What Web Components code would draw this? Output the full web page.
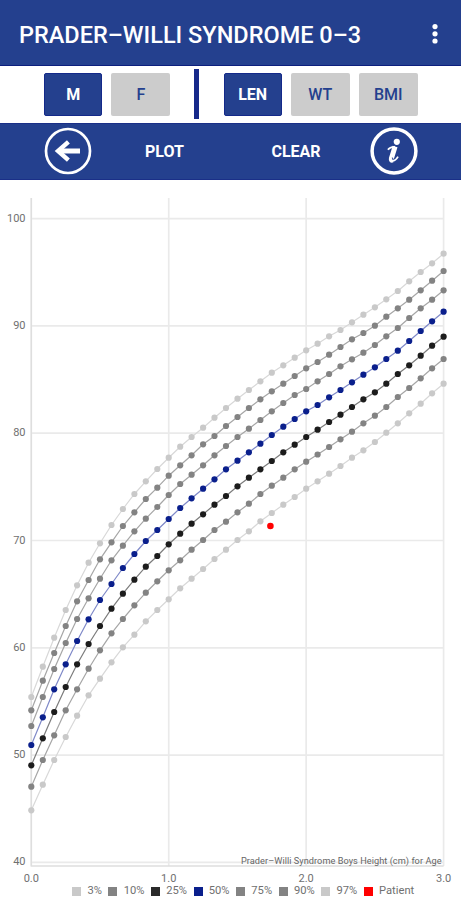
<!DOCTYPE html>
<html lang="en">
<head>
<meta charset="utf-8">
<title>Prader-Willi Syndrome 0-3</title>
<style>
  body {
    margin: 0;
    background: #fff;
    font-family: Roboto, "Liberation Sans", sans-serif;
  }
</style>
</head>
<body>
<growth-app></growth-app>

<script>
class AppHeader extends HTMLElement {
  constructor() {
    super();
    this.attachShadow({ mode: 'open' });
  }

  connectedCallback() {
    this.shadowRoot.innerHTML = `
      <style>
        :host {
          display: flex;
          align-items: center;
          justify-content: space-between;
          box-sizing: border-box;
          height: 65.5px;
          padding: 5px 22px 0 19px;
          background: #24408e;
          border-bottom: 1.5px solid #0c1f7e;
          color: #fff;
        }

        h1 {
          margin: 0;
          font-size: 23.5px;
          font-weight: 500;
          line-height: 28px;
          white-space: nowrap;
        }

        svg {
          display: block;
          margin-top: -2px;
        }
      </style>

      <h1><slot></slot></h1>
      <svg width="8" height="22" fill="#fff">
        <circle cx="4" cy="3.6" r="2.6"/>
        <circle cx="4" cy="10.8" r="2.6"/>
        <circle cx="4" cy="18" r="2.6"/>
      </svg>
    `;
  }
}

class ToggleButton extends HTMLElement {
  constructor() {
    super();
    this.attachShadow({ mode: 'open' });
  }

  connectedCallback() {
    this.shadowRoot.innerHTML = `
      <style>
        :host {
          display: flex;
          align-items: center;
          justify-content: center;
          box-sizing: border-box;
          width: 59px;
          height: 43px;
          border-radius: 2px;
          background: #ccc;
          color: #24408e;
          font-size: 16px;
          font-weight: 500;
          padding-top: 1px;
        }

        :host([selected]) {
          width: 58px;
          background: #24408e;
          border: 1px solid #14298a;
          color: #fff;
          font-weight: 700;
        }
      </style>

      <slot></slot>
    `;
  }
}

class ToggleRow extends HTMLElement {
  constructor() {
    super();
    this.attachShadow({ mode: 'open' });
  }

  connectedCallback() {
    this.shadowRoot.innerHTML = `
      <style>
        :host {
          display: flex;
          align-items: center;
          box-sizing: border-box;
          height: 57px;
          padding-left: 44.3px;
          background: #fff;
        }

        .group {
          display: flex;
          gap: 9px;
        }

        .divider {
          width: 5px;
          height: 50px;
          margin: 0 24.4px 0 24px;
          background: #16298a;
        }
      </style>

      <div class="group"><slot name="sex"></slot></div>
      <div class="divider"></div>
      <div class="group"><slot name="measure"></slot></div>
    `;
  }
}

class ActionBar extends HTMLElement {
  constructor() {
    super();
    this.attachShadow({ mode: 'open' });
  }

  connectedCallback() {
    this.shadowRoot.innerHTML = `
      <style>
        :host {
          display: grid;
          grid-template-columns: 48px 146px 117px 48px;
          align-items: center;
          box-sizing: border-box;
          height: 57.5px;
          padding-left: 43.5px;
          background: #24408e;
          border-top: 1px solid #1a2f88;
          border-bottom: 1px solid #1a2f88;
          color: #fff;
          font-size: 16px;
          font-weight: 700;
          text-align: center;
        }

        svg {
          display: block;
        }

        .info {
          margin-left: 15px;
        }
      </style>

      <svg width="48" height="48" fill="none" stroke="#fff">
        <circle cx="24" cy="24" r="22" stroke-width="2.7"/>
        <path d="M36 24H15" stroke-width="5"/>
        <path d="M24.4 14.8L14 24L24.4 33.2" stroke-width="4.4"/>
      </svg>
      <span>PLOT</span>
      <span>CLEAR</span>
      <svg class="info" width="48" height="48" fill="none" stroke="#fff">
        <circle cx="24" cy="24" r="21.9" stroke-width="3.5"/>
        <circle cx="26.8" cy="14.8" r="3.1" fill="#fff" stroke="none"/>
        <path d="M18 22.8C19.8 20 22.6 20 25 19.8" stroke-width="1.9"/>
        <path d="M25.1 19.6L21.4 31.4Q21 33.6 22.6 33" stroke-width="5"/>
        <path d="M21.4 33.8C24.4 34.4 26.6 32 28 29.6" stroke-width="1.8"/>
      </svg>
    `;
  }
}

// vertical position of each monthly point, 0 to 36 months
const CURVES = [
  { color: '#c9c9c9', line: '#d8d8d8', points: [697, 666.7, 637.7, 610, 585.3, 562.7, 543.3, 525, 509, 494, 481.3, 469, 457.7, 446.7, 437, 427.7, 417.7, 408, 398.7, 390, 381.3, 372.7, 365.3, 357.7, 350.3, 343.7, 336.3, 330, 322.3, 314.7, 307.3, 299.3, 291, 281.3, 272, 263.3, 253.7] },
  { color: '#838383', line: '#a6a6a6', points: [710.3, 680.7, 653, 626, 601.3, 580, 559.3, 542.3, 526, 512.3, 499, 487.7, 475.7, 465.3, 455.3, 444.3, 436, 426, 417, 408, 399.3, 391.3, 383.7, 376, 368.3, 362, 354.7, 347, 339.3, 333, 325.7, 316.7, 308.3, 299.7, 290.3, 280.7, 271] },
  { color: '#838383', line: '#a6a6a6', points: [726, 697, 669, 643, 619, 598.3, 578.7, 560.3, 545.7, 531.3, 518.7, 507, 495, 484, 474.7, 465.3, 455.3, 446, 437, 428.7, 420, 411.3, 403, 395, 389, 381.3, 374, 366.3, 359.3, 352.7, 345, 336.3, 328, 318, 308.3, 299.7, 290.3] },
  { color: '#0a1f8c', line: '#7f89c8', points: [745, 717.3, 689.3, 664.3, 641, 619.3, 600, 584, 568, 554, 541, 530, 519, 508, 498.3, 488.7, 479.3, 469.3, 460.7, 452.3, 443.7, 435, 426.7, 419, 411.3, 405, 397.3, 390, 382.3, 374.7, 367.3, 359, 350.7, 341, 331, 321.3, 311.7] },
  { color: '#1c1c1c', line: '#7c7c7c', points: [765.3, 738.3, 712, 687, 664.3, 644, 626, 608.7, 593.7, 579.7, 566.7, 556, 544.3, 533.7, 523.7, 514.3, 504.7, 496, 486.3, 477.7, 469.3, 461, 452.3, 444.7, 437, 429.7, 422, 414.7, 407, 399.3, 392.3, 383.7, 374, 365.3, 355.7, 345.7, 336.7] },
  { color: '#838383', line: '#a6a6a6', points: [786.7, 760, 735.3, 710.3, 689.3, 668.7, 650.3, 633.3, 619, 605.3, 592.7, 581.3, 570.3, 560.3, 549.7, 540, 530, 521.7, 512.3, 503.7, 494, 485.7, 477.7, 469.3, 461.7, 454.5, 447, 439.3, 431.7, 423.3, 415.7, 407, 397, 388, 378.3, 368.3, 359] },
  { color: '#c9c9c9', line: '#d8d8d8', points: [810.3, 784.7, 760, 737, 715.7, 695.3, 678.7, 662.3, 647.3, 634.7, 621.3, 610, 599.3, 588.3, 578.7, 569, 559, 549.7, 540, 531.3, 521.3, 513, 504.7, 497, 488.7, 481.3, 473.7, 466, 457.7, 450.3, 442, 432.7, 423.3, 413.3, 403.7, 393.3, 383.7] }
];

const LEFT = 31.3;
const RIGHT = 443.6;
const TOP = 198;
const BOTTOM = 866;

class GrowthChart extends HTMLElement {
  constructor() {
    super();
    this.attachShadow({ mode: 'open' });
  }

  grid() {
    let out = '';
    for (let year = 0; year <= 3; year++) {
      const x = LEFT + year * (RIGHT - LEFT) / 3;
      out += `<path class="grid" d="M${x} ${TOP}V${BOTTOM}"/>`;
      out += `<text x="${x}" y="881.6" text-anchor="middle">${year}.0</text>`;
    }
    for (let cm = 40; cm <= 100; cm += 10) {
      const y = 218.6 + (100 - cm) * 10.73;
      out += `<path class="grid" d="M${LEFT} ${y}H${RIGHT}"/>`;
      out += `<text x="25.5" y="${y + 3}" text-anchor="end">${cm}</text>`;
    }
    out += `<path class="axis" d="M${LEFT} ${TOP}V${BOTTOM}H${RIGHT}"/>`;
    return out;
  }

  curve({ color, line, points }) {
    const step = (RIGHT - LEFT) / 36;
    const at = points.map((y, i) => [(LEFT + i * step).toFixed(1), y]);
    const dots = at.map(([x, y]) => `<circle cx="${x}" cy="${y}" r="3.1"/>`).join('');
    return `
      <polyline points="${at.join(' ')}" fill="none" stroke="${line}" stroke-width="1.2"/>
      <g fill="${color}">${dots}</g>`;
  }

  connectedCallback() {
    this.shadowRoot.innerHTML = `
      <style>
        :host {
          display: block;
          height: 704px;
        }

        svg {
          display: block;
          overflow: visible;
        }

        text {
          font-family: Roboto, "Liberation Sans", sans-serif;
          font-size: 11px;
          fill: #707070;
        }

        .caption {
          font-size: 9.2px;
          fill: #666;
        }

        .grid {
          stroke: #eaeaea;
          stroke-width: 1.7;
        }

        .axis {
          fill: none;
          stroke: #dedede;
          stroke-width: 1.3;
        }
      </style>

      <svg width="461" height="704" viewBox="0 180 461 704">
        ${this.grid()}
        ${CURVES.map(c => this.curve(c)).join('')}
        <circle cx="270.4" cy="526" r="3.3" fill="#f00"/>
        <text class="caption" x="441.5" y="863.5" text-anchor="end" textLength="200.5">Prader–Willi Syndrome Boys Height (cm) for Age</text>
      </svg>
    `;
  }
}

class LegendItem extends HTMLElement {
  constructor() {
    super();
    this.attachShadow({ mode: 'open' });
  }

  connectedCallback() {
    this.shadowRoot.innerHTML = `
      <style>
        :host {
          display: flex;
          align-items: center;
          gap: 6.2px;
          color: #707070;
          font-size: 11.2px;
          line-height: 14px;
        }

        i {
          width: 9px;
          height: 9px;
          background: ${this.getAttribute('color')};
        }
      </style>

      <i></i><span><slot></slot></span>
    `;
  }
}

class ChartLegend extends HTMLElement {
  constructor() {
    super();
    this.attachShadow({ mode: 'open' });
  }

  connectedCallback() {
    this.shadowRoot.innerHTML = `
      <style>
        :host {
          display: flex;
          gap: 6.6px;
          height: 14px;
          padding-left: 72.2px;
        }
      </style>

      <slot></slot>
    `;
  }
}

class GrowthApp extends HTMLElement {
  constructor() {
    super();
    this.attachShadow({ mode: 'open' });
  }

  connectedCallback() {
    this.shadowRoot.innerHTML = `
      <style>
        :host {
          display: flex;
          flex-direction: column;
          width: 461px;
          height: 900px;
        }
      </style>

      <app-header>PRADER–WILLI SYNDROME 0–3</app-header>
      <toggle-row>
        <toggle-button slot="sex" selected>M</toggle-button>
        <toggle-button slot="sex">F</toggle-button>
        <toggle-button slot="measure" selected>LEN</toggle-button>
        <toggle-button slot="measure">WT</toggle-button>
        <toggle-button slot="measure">BMI</toggle-button>
      </toggle-row>
      <action-bar></action-bar>
      <growth-chart></growth-chart>
      <chart-legend>
        <legend-item color="#c9c9c9">3%</legend-item>
        <legend-item color="#838383">10%</legend-item>
        <legend-item color="#2a2a2a">25%</legend-item>
        <legend-item color="#0a1f8c">50%</legend-item>
        <legend-item color="#838383">75%</legend-item>
        <legend-item color="#838383">90%</legend-item>
        <legend-item color="#c9c9c9">97%</legend-item>
        <legend-item color="#f00">Patient</legend-item>
      </chart-legend>
    `;
  }
}

customElements.define('app-header', AppHeader);
customElements.define('toggle-button', ToggleButton);
customElements.define('toggle-row', ToggleRow);
customElements.define('action-bar', ActionBar);
customElements.define('growth-chart', GrowthChart);
customElements.define('legend-item', LegendItem);
customElements.define('chart-legend', ChartLegend);
customElements.define('growth-app', GrowthApp);
</script>
</body>
</html>
